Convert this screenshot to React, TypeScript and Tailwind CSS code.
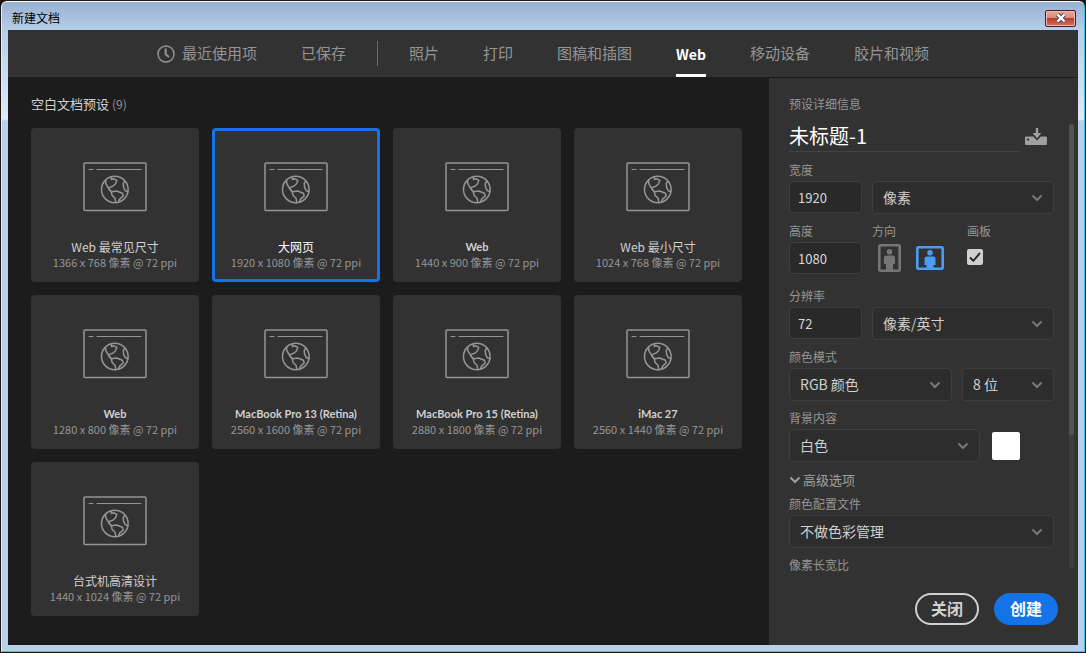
import { useState } from "react";
import type { ReactNode, SelectHTMLAttributes } from "react";
import clsx from "clsx";

interface Preset {
  name: string;
  width: number;
  height: number;
}

const TABS_LEFT = ["最近使用项", "已保存"];
const TABS_RIGHT = ["照片", "打印", "图稿和插图", "Web", "移动设备", "胶片和视频"];

const PRESETS: Preset[] = [
  { name: "Web 最常见尺寸", width: 1366, height: 768 },
  { name: "大网页", width: 1920, height: 1080 },
  { name: "Web", width: 1440, height: 900 },
  { name: "Web 最小尺寸", width: 1024, height: 768 },
  { name: "Web", width: 1280, height: 800 },
  { name: "MacBook Pro 13 (Retina)", width: 2560, height: 1600 },
  { name: "MacBook Pro 15 (Retina)", width: 2880, height: 1800 },
  { name: "iMac 27", width: 2560, height: 1440 },
  { name: "台式机高清设计", width: 1440, height: 1024 },
];

const isLatin = (s: string) => /^[\x20-\x7e]+$/.test(s);

function ClockIcon() {
  return (
    <svg width="18" height="18" viewBox="0 0 18 18" fill="none" stroke="currentColor">
      <circle cx="9" cy="9" r="8" strokeWidth="1.5" />
      <path d="M8.7 3.5V9.2L12 12" strokeWidth="2" />
    </svg>
  );
}

function WebIcon() {
  return (
    <svg
      width="64"
      height="50"
      viewBox="0 0 64 50"
      fill="none"
      stroke="#959595"
      strokeWidth="1.5"
      strokeLinecap="round"
      strokeLinejoin="round"
    >
      <rect x="1" y="1" width="62" height="47.5" rx="1" />
      <path d="M6 7.5h4M14 7.5h44" strokeWidth="1" />
      <circle cx="31.8" cy="27.5" r="13.3" />
      <path d="M28.4 14.8V17.4L31 16.8L33.8 18.4L32.4 22L29.8 24.2L25.8 25.6L26.4 27.6L28 29.6" />
      <path d="M22.6 18.6L22.8 21.6L25.6 26.4L28.4 29.8L29 33.2L32 36.2L32.8 40.4" />
      <path d="M28.4 29.8L33.6 29L39.4 31.2L40.2 34L36.4 37.4L35.4 40.2" />
      <path d="M42 19L40.2 21.4L40.6 25.4L42.4 28.8L45 29.8" />
    </svg>
  );
}

function SaveIcon() {
  return (
    <svg width="22" height="17" viewBox="0 0 22 17" fill="#a0a0a0">
      <path
        fillRule="evenodd"
        d="M1 8.5h7.2L12 12.6L15.8 8.5H21a1 1 0 0 1 1 1V16a1 1 0 0 1-1 1H1a1 1 0 0 1-1-1V9.5a1 1 0 0 1 1-1ZM2 10.5v2h2v-2Z"
      />
      <path d="M10.8 0h2.4v5h3.2L12 10.2L7.6 5h3.2Z" />
    </svg>
  );
}

function PersonIcon({ landscape = false }: { landscape?: boolean }) {
  const w = landscape ? 28 : 23;
  const h = landscape ? 24 : 28;
  const cx = w / 2;
  const top = landscape ? 4 : 5;
  return (
    <svg width={w} height={h} viewBox={`0 0 ${w} ${h}`} fill="currentColor">
      <rect
        x="1.3"
        y="1.3"
        width={w - 2.6}
        height={h - 2.6}
        rx="1"
        fill="none"
        stroke="currentColor"
        strokeWidth="2.6"
      />
      <circle cx={cx} cy={top + 2.8} r="2.8" />
      <path
        d={`M${cx - 3} ${top + 6.5}h6a2.5 2.5 0 0 1 2.5 2.5v6h-2v${h - top - 16}h-7v-${h - top - 16}h-2v-6a2.5 2.5 0 0 1 2.5-2.5Z`}
      />
    </svg>
  );
}

function Chevron({ className }: { className?: string }) {
  return (
    <svg
      width="12"
      height="8"
      viewBox="0 0 12 8"
      fill="none"
      stroke="currentColor"
      strokeWidth="2"
      className={className}
    >
      <path d="M1.5 1.5L6 6l4.5-4.5" />
    </svg>
  );
}

function Dropdown({
  className,
  children,
  ...rest
}: SelectHTMLAttributes<HTMLSelectElement> & { children: ReactNode }) {
  return (
    <div className={clsx("relative", className)}>
      <select
        {...rest}
        className="w-full h-[33px] pl-2.5 pr-8 pb-0.5 appearance-none rounded-[4px] border border-[#3e3e3e] bg-[#2d2d2d] text-sm text-[#d0d0d0] outline-none"
      >
        {children}
      </select>
      <Chevron className="absolute right-[11px] top-[13px] text-[#7a7a7a] pointer-events-none" />
    </div>
  );
}

function NumberBox({ id, value }: { id: string; value: string }) {
  return (
    <input
      id={id}
      defaultValue={value}
      className="w-[73px] h-8 px-2 rounded-[4px] border border-[#3e3e3e] bg-[#292929] text-[13px] text-[#d8d8d8] outline-none"
    />
  );
}

function FieldLabel({ htmlFor, children }: { htmlFor: string; children: ReactNode }) {
  return (
    <label htmlFor={htmlFor} className="block text-xs leading-[22px] text-[#959595]">
      {children}
    </label>
  );
}

function Tab({
  label,
  active,
  onClick,
}: {
  label: string;
  active: boolean;
  onClick: () => void;
}) {
  return (
    <button
      type="button"
      onClick={onClick}
      className={clsx(
        "h-full flex items-center gap-[7px] border-y-3 border-t-transparent",
        active
          ? "border-b-white text-white text-sm font-bold"
          : "border-b-transparent text-[#959595] text-[15px]",
      )}
    >
      {label === "最近使用项" && <ClockIcon />}
      {label}
    </button>
  );
}

function PresetCard({
  preset,
  selected,
  onClick,
}: {
  preset: Preset;
  selected: boolean;
  onClick: () => void;
}) {
  return (
    <button
      type="button"
      onClick={onClick}
      className={clsx(
        "h-[154px] flex flex-col items-center rounded-[4px] border-3 bg-[#323232] pt-[31px]",
        selected ? "border-[#1473e6]" : "border-[#323232]",
      )}
    >
      <WebIcon />
      <span
        className={clsx(
          "mt-[26px] leading-[17px] whitespace-nowrap",
          isLatin(preset.name)
            ? "text-[11px] font-bold font-['Lato','Noto_Sans_CJK_SC',sans-serif]"
            : "text-xs",
          selected ? "text-white" : "text-[#d0d0d0]",
        )}
      >
        {preset.name}
      </span>
      <span className="text-[11px] leading-[15px] text-[#959595] whitespace-nowrap">
        {preset.width} x {preset.height} 像素 @ 72 ppi
      </span>
    </button>
  );
}

function DetailsPanel() {
  return (
    <aside className="w-[309px] shrink-0 flex flex-col bg-[#323232] pt-[15px] pb-5 pl-5">
      <h2 className="text-xs leading-[22px] text-[#959595]">预设详细信息</h2>

      <div className="flex-1 flex gap-[15px] pr-1">
        <div className="flex-1 min-w-0">
          <div className="mt-1.5 mb-[7px] flex items-center">
            <input
              aria-label="名称"
              defaultValue="未标题-1"
              className="flex-1 min-w-0 h-[31px] pb-0.5 border-b border-[#434343] bg-transparent text-xl text-white outline-none"
            />
            <button type="button" aria-label="保存预设" className="ml-[5px] mr-[7px]">
              <SaveIcon />
            </button>
          </div>

          <div className="flex flex-col gap-1.5">
            <div>
              <FieldLabel htmlFor="width">宽度</FieldLabel>
              <div className="flex gap-2.5">
                <NumberBox id="width" value="1920" />
                <Dropdown aria-label="单位" className="flex-1">
                  <option>像素</option>
                </Dropdown>
              </div>
            </div>

            <div className="flex h-[59px]">
              <div className="w-[83px]">
                <FieldLabel htmlFor="height">高度</FieldLabel>
                <NumberBox id="height" value="1080" />
              </div>
              <div className="w-[95px]">
                <span className="block text-xs leading-[22px] text-[#959595]">方向</span>
                <div className="flex items-center gap-[15px] h-8 pl-1.5">
                  <button type="button" aria-label="纵向" className="text-[#767676]">
                    <PersonIcon />
                  </button>
                  <button type="button" aria-label="横向" className="text-[#4b9cf5]">
                    <PersonIcon landscape />
                  </button>
                </div>
              </div>
              <div>
                <FieldLabel htmlFor="artboard">画板</FieldLabel>
                <div className="relative mt-[7px] size-4">
                  <input
                    id="artboard"
                    type="checkbox"
                    defaultChecked
                    className="block size-4 appearance-none rounded-[2px] bg-[#d0d0d0]"
                  />
                  <svg
                    viewBox="0 0 16 16"
                    fill="none"
                    stroke="#2b2b2b"
                    strokeWidth="2"
                    className="absolute inset-0 size-4 pointer-events-none"
                  >
                    <path d="M3 8.5L6.3 11.8L13 4" />
                  </svg>
                </div>
              </div>
            </div>

            <div>
              <FieldLabel htmlFor="resolution">分辨率</FieldLabel>
              <div className="flex gap-2.5">
                <NumberBox id="resolution" value="72" />
                <Dropdown aria-label="分辨率单位" className="flex-1">
                  <option>像素/英寸</option>
                </Dropdown>
              </div>
            </div>

            <div>
              <FieldLabel htmlFor="mode">颜色模式</FieldLabel>
              <div className="flex gap-2.5">
                <Dropdown id="mode" className="flex-1">
                  <option>RGB 颜色</option>
                </Dropdown>
                <Dropdown aria-label="位深度" className="w-[92px]">
                  <option>8 位</option>
                </Dropdown>
              </div>
            </div>

            <div>
              <FieldLabel htmlFor="background">背景内容</FieldLabel>
              <div className="flex items-center gap-3 pr-[34px]">
                <Dropdown id="background" className="flex-1">
                  <option>白色</option>
                </Dropdown>
                <button
                  type="button"
                  aria-label="背景颜色"
                  className="size-7 rounded-[2px] bg-white"
                />
              </div>
            </div>

            <div>
              <button
                type="button"
                className="flex items-center gap-0.5 h-6 mb-px text-[13px] text-[#a0a0a0]"
              >
                <Chevron />
                高级选项
              </button>
              <FieldLabel htmlFor="profile">颜色配置文件</FieldLabel>
              <Dropdown id="profile">
                <option>不做色彩管理</option>
              </Dropdown>
            </div>

            <span className="block text-xs leading-[22px] text-[#959595]">像素长宽比</span>
          </div>
        </div>

        {/* Scrollbar */}
        <div className="w-[5px] mt-[9px] mb-[25px] rounded-full bg-[#3e3e3e]">
          <div className="h-[70%] rounded-full bg-[#535353]" />
        </div>
      </div>

      <div className="flex justify-end gap-[15px] pr-5">
        <button
          type="button"
          className="w-16 h-8 pb-0.5 rounded-full border-2 border-[#d0d0d0] text-base leading-none font-bold text-[#d0d0d0]"
        >
          关闭
        </button>
        <button
          type="button"
          className="w-16 h-8 pb-0.5 rounded-full bg-[#1473e6] text-base leading-none font-bold text-white"
        >
          创建
        </button>
      </div>
    </aside>
  );
}

export default function App() {
  const [tab, setTab] = useState("Web");
  const [selected, setSelected] = useState(1);

  return (
    <div className="min-h-screen flex bg-[#1b1719] p-px font-['Noto_Sans_CJK_SC',sans-serif]">
      <div className="flex-1 flex flex-col rounded-t-[6px] border border-t-white border-l-[#e6f0fa] border-r-[#35c6ea] border-b-[#35c6ea] bg-[linear-gradient(#98b1d0_0,#b6cee9_28px,#dfeaf6_117px,#b9d0ec_119px)] px-1.5 pb-1.5">
        <header className="h-7 flex items-center justify-between pl-1 pr-0.5">
          <h1 className="text-xs text-black pt-1">新建文档</h1>
          <button
            type="button"
            aria-label="关闭窗口"
            className="mt-1 w-[31px] h-[17px] flex items-center justify-center rounded-[2px] border border-[#4b1a24] bg-[linear-gradient(#e6a79b_0%,#d98a7c_48%,#bb3d29_50%,#d0705f_100%)] shadow-[inset_0_0_0_1px_#efb9af]"
          >
            <svg width="12" height="10" viewBox="0 0 12 10" fill="none">
              <path d="M2.5 1.5L9.5 8.5M9.5 1.5L2.5 8.5" stroke="#4a4f5c" strokeWidth="4.4" />
              <path d="M2.5 1.5L9.5 8.5M9.5 1.5L2.5 8.5" stroke="#fff" strokeWidth="2.4" />
            </svg>
          </button>
        </header>

        <nav className="h-[47px] flex items-center justify-center gap-[31px] bg-[#323232]">
          <div className="h-full flex gap-11">
            {TABS_LEFT.map((t) => (
              <Tab key={t} label={t} active={t === tab} onClick={() => setTab(t)} />
            ))}
          </div>
          <div className="w-px h-[25px] bg-[#6a6a6a]" />
          <div className="h-full flex gap-11">
            {TABS_RIGHT.map((t) => (
              <Tab key={t} label={t} active={t === tab} onClick={() => setTab(t)} />
            ))}
          </div>
        </nav>

        <div className="flex-1 flex border-t border-[#1c1c1c] bg-[#1c1c1c]">
          <main className="flex-1 min-w-0 pt-[15px] pl-[23px] pr-[27px]">
            <h2 className="text-[13px] leading-[22px] text-[#d0d0d0]">
              空白文档预设 <span className="text-xs text-[#959595]">(9)</span>
            </h2>
            <div className="mt-[13px] grid grid-cols-[repeat(auto-fill,168px)] gap-[13px]">
              {PRESETS.map((p, i) => (
                <PresetCard
                  key={i}
                  preset={p}
                  selected={i === selected}
                  onClick={() => setSelected(i)}
                />
              ))}
            </div>
          </main>
          <DetailsPanel />
        </div>
      </div>
    </div>
  );
}
